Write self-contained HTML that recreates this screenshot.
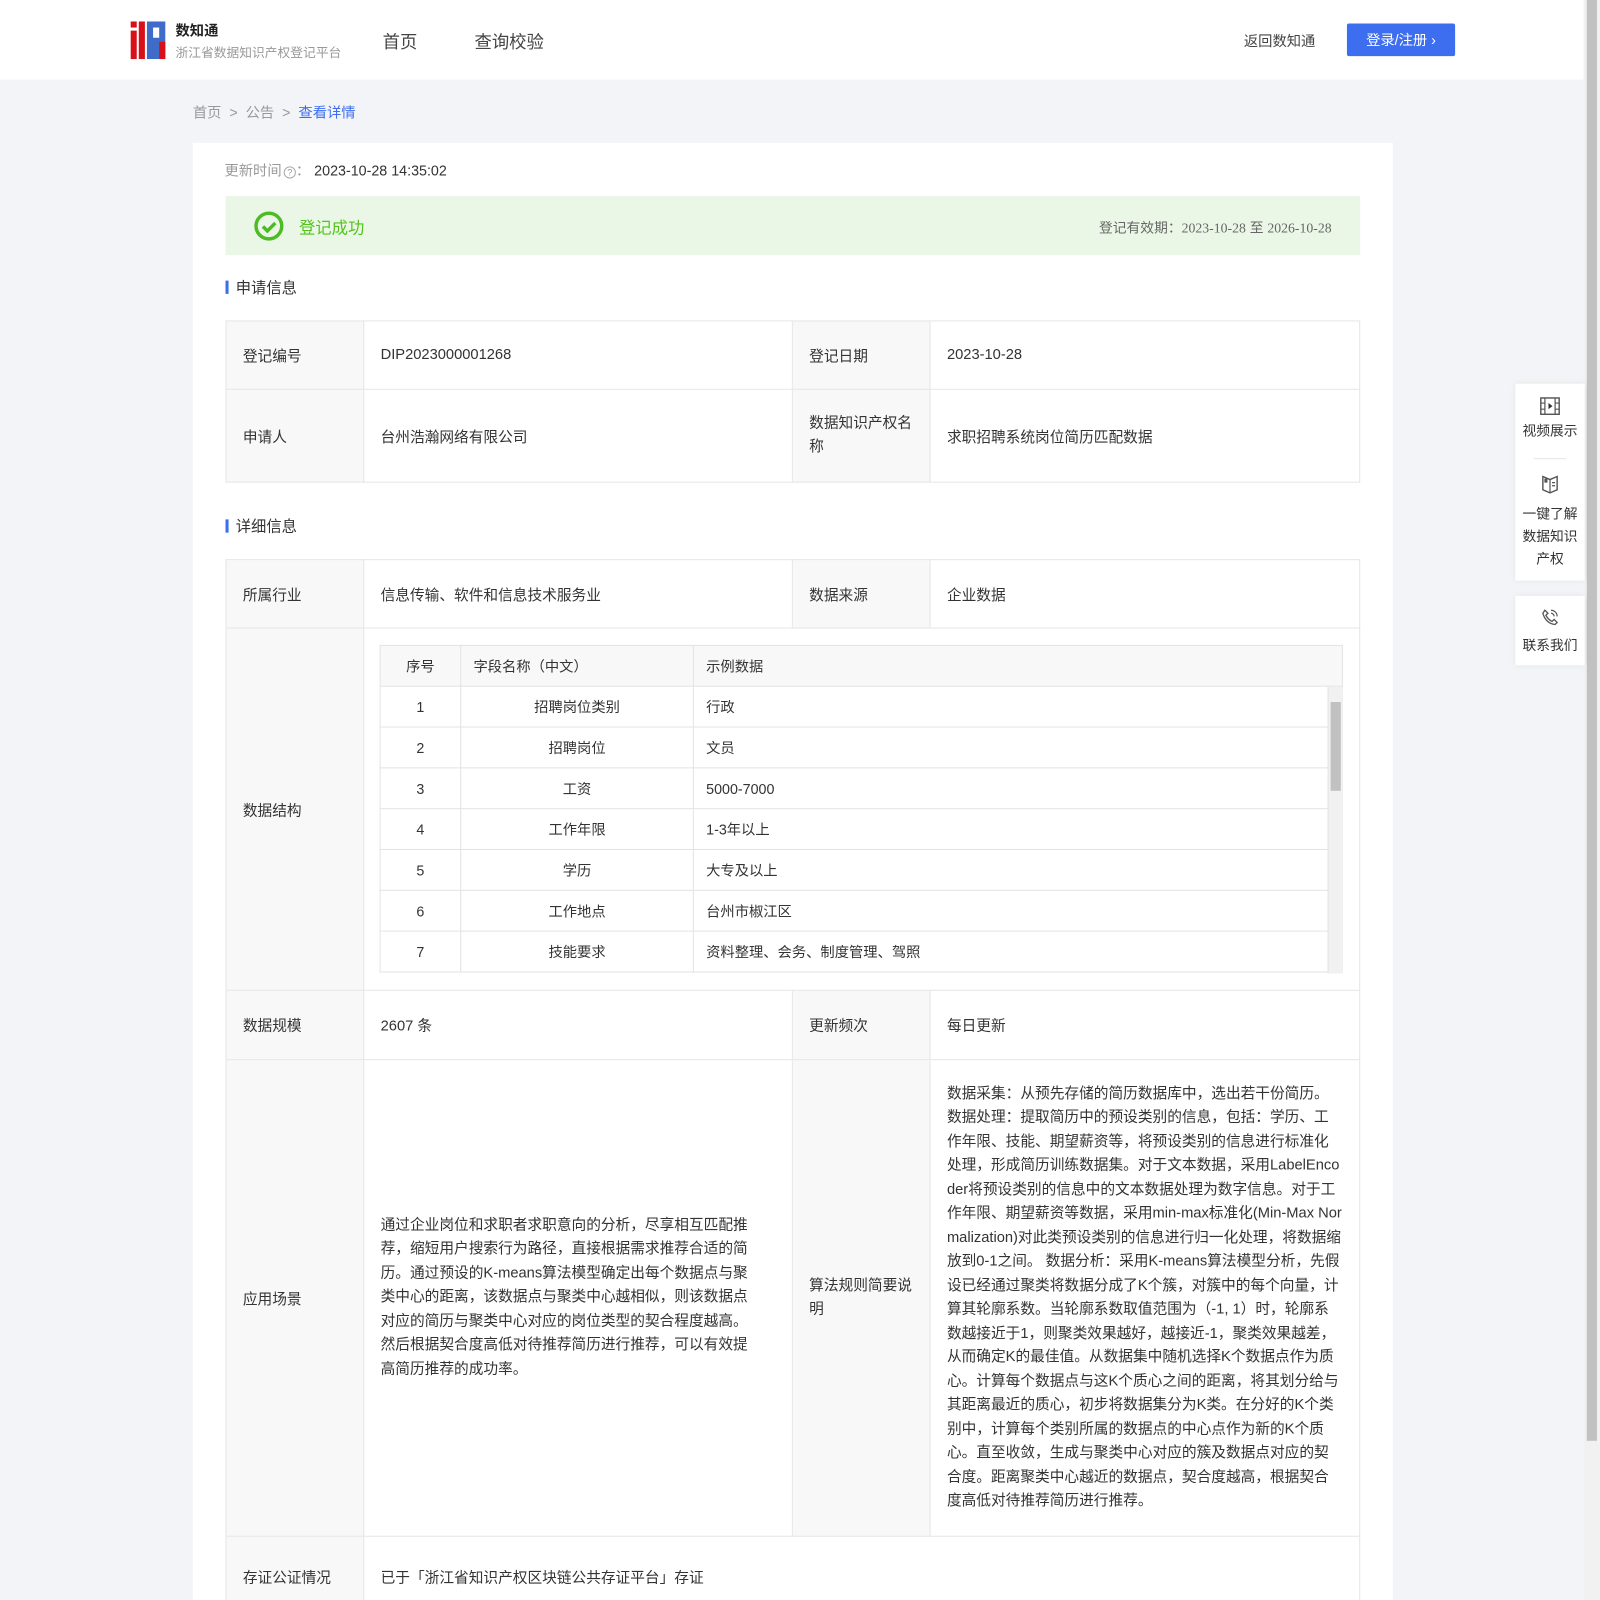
<!DOCTYPE html>
<html><head><meta charset="utf-8"><style>
*{margin:0;padding:0;box-sizing:border-box}
html,body{width:1600px;height:1600px;overflow:hidden}
body{background:#f2f4f7;font-family:"Liberation Sans","Noto Sans CJK SC",sans-serif;color:#333;font-size:14px;position:relative}
#w{position:absolute;left:0;top:0;width:1568px;height:1568px;transform:scale(1.020408);transform-origin:0 0}
.a{position:absolute}
.hdr{left:0;top:0;width:1552px;height:78px;background:#fff}
.card{left:189px;top:140px;width:1176px;height:1480px;background:#fff}
table{border-collapse:collapse;position:absolute;table-layout:fixed}
td{border:1px solid #e6e6e6;padding:0 16px;font-size:14.4px;color:#333;vertical-align:middle}
td.l{background:#f8f8f8}
.it td{border:1px solid #e3e3e3;padding:0 12px;height:40px;font-size:14px}
.sec{font-size:15px;color:#333}
.sec:before{content:"";display:inline-block;width:3px;height:13px;background:#3c6ef0;margin-right:7px;vertical-align:-1px}
.long{line-height:23.5px;font-size:14.4px;word-break:break-all}
.side{left:1485px;width:68px;background:#fff;box-shadow:0 0 6px rgba(0,0,0,.08);text-align:center;font-size:13.5px;color:#333;line-height:22px}
</style></head><body><div id="w">
<div class="a hdr"></div>
<svg class="a" style="left:128px;top:21px" width="35" height="37" viewBox="0 0 35 37">
<rect x="0" y="0" width="6" height="6" fill="#d8101a"/><rect x="0" y="9" width="6" height="28" fill="#d8101a"/>
<rect x="8" y="0" width="6" height="37" fill="#d8101a"/>
<rect x="16" y="0" width="18" height="37" fill="#3f6cc8"/><rect x="22" y="6" width="6" height="10" fill="#fff"/><rect x="28" y="20" width="6" height="17" fill="#d8101a"/>
</svg>
<div class="a" style="left:172px;top:20px;font-size:14px;font-weight:bold;color:#222">数知通</div>
<div class="a" style="left:172px;top:41px;font-size:12.5px;color:#999">浙江省数据知识产权登记平台</div>
<div class="a" style="left:375px;top:27px;font-size:17px;color:#444">首页</div>
<div class="a" style="left:465px;top:27px;font-size:17px;color:#444">查询校验</div>
<div class="a" style="left:1219px;top:30px;font-size:14px;color:#444">返回数知通</div>
<div class="a" style="left:1320px;top:23px;width:106px;height:32px;background:#3d6ef0;border-radius:2px;color:#fff;font-size:14px;line-height:32px;text-align:center">登录/注册 ›</div>
<div class="a" style="left:1552px;top:0;width:16px;height:1568px;background:#f1f1f1"></div>
<div class="a" style="left:1555px;top:0;width:10px;height:1412px;background:#c1c1c1"></div>

<div class="a" style="left:189px;top:100px;font-size:14px;color:#999">首页 &nbsp;&gt;&nbsp; 公告 &nbsp;&gt;&nbsp; <span style="color:#3d6ef0">查看详情</span></div>
<div class="a card"></div>
<div class="a" style="left:220px;top:157px;font-size:14px;color:#999">更新时间<span style="display:inline-block;width:12px;height:12px;border:1px solid #aaa;border-radius:50%;font-size:9px;line-height:10px;text-align:center;margin-left:2px">?</span>： <span style="color:#333">2023-10-28 14:35:02</span></div>
<div class="a" style="left:221px;top:192px;width:1112px;height:58px;background:#ebf7e6"></div>
<svg class="a" style="left:248px;top:206px" width="31" height="31" viewBox="0 0 32 32"><circle cx="16" cy="16" r="13" fill="none" stroke="#4cbb24" stroke-width="3.5"/><path d="M10 16.5l4.5 4.5 8-8" fill="none" stroke="#4cbb24" stroke-width="3.5"/></svg>
<div class="a" style="left:293px;top:210px;font-size:16px;color:#52c41a">登记成功</div>
<div class="a" style="left:1073px;top:212px;width:232px;text-align:right;font-size:13.5px;color:#666;white-space:nowrap">登记有效期：<span style="font-family:'Liberation Serif',serif">2023-10-28</span> 至 <span style="font-family:'Liberation Serif',serif">2026-10-28</span></div>

<div class="a sec" style="left:221px;top:271px">申请信息</div>
<table style="left:221px;top:314px;width:1112px">
<colgroup><col style="width:135px"><col style="width:420px"><col style="width:135px"><col></colgroup>
<tr style="height:67px"><td class="l">登记编号</td><td>DIP2023000001268</td><td class="l">登记日期</td><td>2023-10-28</td></tr>
<tr style="height:91px"><td class="l">申请人</td><td>台州浩瀚网络有限公司</td><td class="l" style="line-height:23px">数据知识产权名称</td><td>求职招聘系统岗位简历匹配数据</td></tr>
</table>

<div class="a sec" style="left:221px;top:505px">详细信息</div>
<table style="left:221px;top:548px;width:1112px">
<colgroup><col style="width:135px"><col style="width:420px"><col style="width:135px"><col></colgroup>
<tr style="height:67px"><td class="l">所属行业</td><td>信息传输、软件和信息技术服务业</td><td class="l">数据来源</td><td>企业数据</td></tr>
<tr style="height:355px"><td class="l">数据结构</td><td colspan="3"></td></tr>
<tr style="height:68px"><td class="l">数据规模</td><td>2607 条</td><td class="l">更新频次</td><td>每日更新</td></tr>
<tr style="height:467px"><td class="l">应用场景</td><td class="long" style="padding-right:31px">通过企业岗位和求职者求职意向的分析，尽享相互匹配推荐，缩短用户搜索行为路径，直接根据需求推荐合适的简历。通过预设的K-means算法模型确定出每个数据点与聚类中心的距离，该数据点与聚类中心越相似，则该数据点对应的简历与聚类中心对应的岗位类型的契合程度越高。然后根据契合度高低对待推荐简历进行推荐，可以有效提高简历推荐的成功率。</td><td class="l" style="line-height:23px">算法规则简要说明</td><td class="long">数据采集：从预先存储的简历数据库中，选出若干份简历。数据处理：提取简历中的预设类别的信息，包括：学历、工作年限、技能、期望薪资等，将预设类别的信息进行标准化处理，形成简历训练数据集。对于文本数据，采用LabelEncoder将预设类别的信息中的文本数据处理为数字信息。对于工作年限、期望薪资等数据，采用min-max标准化(Min-Max Normalization)对此类预设类别的信息进行归一化处理，将数据缩放到0-1之间。 数据分析：采用K-means算法模型分析，先假设已经通过聚类将数据分成了K个簇，对簇中的每个向量，计算其轮廓系数。当轮廓系数取值范围为（-1, 1）时，轮廓系数越接近于1，则聚类效果越好，越接近-1，聚类效果越差，从而确定K的最佳值。从数据集中随机选择K个数据点作为质心。计算每个数据点与这K个质心之间的距离，将其划分给与其距离最近的质心，初步将数据集分为K类。在分好的K个类别中，计算每个类别所属的数据点的中心点作为新的K个质心。直至收敛，生成与聚类中心对应的簇及数据点对应的契合度。距离聚类中心越近的数据点，契合度越高，根据契合度高低对待推荐简历进行推荐。</td></tr>
<tr style="height:80px"><td class="l">存证公证情况</td><td colspan="3">已于「浙江省知识产权区块链公共存证平台」存证</td></tr>
</table>

<table class="it" style="left:372px;top:632px;width:944px">
<colgroup><col style="width:79px"><col style="width:228px"><col></colgroup>
<tr style="background:#f8f8f8"><td style="text-align:center">序号</td><td>字段名称（中文）</td><td>示例数据</td></tr>
<tr><td style="text-align:center">1</td><td style="text-align:center">招聘岗位类别</td><td>行政</td></tr>
<tr><td style="text-align:center">2</td><td style="text-align:center">招聘岗位</td><td>文员</td></tr>
<tr><td style="text-align:center">3</td><td style="text-align:center">工资</td><td>5000-7000</td></tr>
<tr><td style="text-align:center">4</td><td style="text-align:center">工作年限</td><td>1-3年以上</td></tr>
<tr><td style="text-align:center">5</td><td style="text-align:center">学历</td><td>大专及以上</td></tr>
<tr><td style="text-align:center">6</td><td style="text-align:center">工作地点</td><td>台州市椒江区</td></tr>
<tr><td style="text-align:center">7</td><td style="text-align:center">技能要求</td><td>资料整理、会务、制度管理、驾照</td></tr>
</table>
<div class="a" style="left:1301px;top:673px;width:15px;height:281px;background:#f1f1f1;border-left:1px solid #e3e3e3"></div>
<div class="a" style="left:1304px;top:688px;width:10px;height:87px;background:#c1c1c1"></div>

<div class="a side" style="top:376px;height:193px">
<svg style="margin-top:13px" width="20" height="18" viewBox="0 0 20 18"><rect x="1" y="1" width="18" height="16" fill="none" stroke="#555" stroke-width="1.4"/><path d="M5 1v16M15 1v16M1 6h4M1 12h4M15 6h4M15 12h4" stroke="#555" stroke-width="1.2"/><path d="M8.5 6v6l4-3z" fill="#333"/></svg>
<div style="margin-top:-2px">视频展示</div>
<div style="width:32px;height:1px;background:#e5e5e5;margin:15px auto 14px"></div>
<svg width="20" height="20" viewBox="0 0 20 20"><path d="M3 3l7 3 7-3v13l-7 3-7-3z" fill="none" stroke="#555" stroke-width="1.4"/><path d="M10 6v13M12 9h3M12 12h3" stroke="#555" stroke-width="1.2"/><rect x="4.5" y="5" width="3" height="4" fill="#555"/></svg>
<div style="margin-top:2px">一键了解<br>数据知识<br>产权</div>
</div>
<div class="a side" style="top:584px;height:68px">
<svg style="margin-top:11px" width="20" height="20" viewBox="0 0 20 20"><path d="M5 3l3 3-2 2q2 4 6 6l2-2 3 3-2 2q-9-1-12-11z" fill="none" stroke="#555" stroke-width="1.3"/><path d="M11 3a6 6 0 0 1 6 6M11 6a3 3 0 0 1 3 3" fill="none" stroke="#555" stroke-width="1.2"/></svg>
<div>联系我们</div>
</div>
</div></body></html>
